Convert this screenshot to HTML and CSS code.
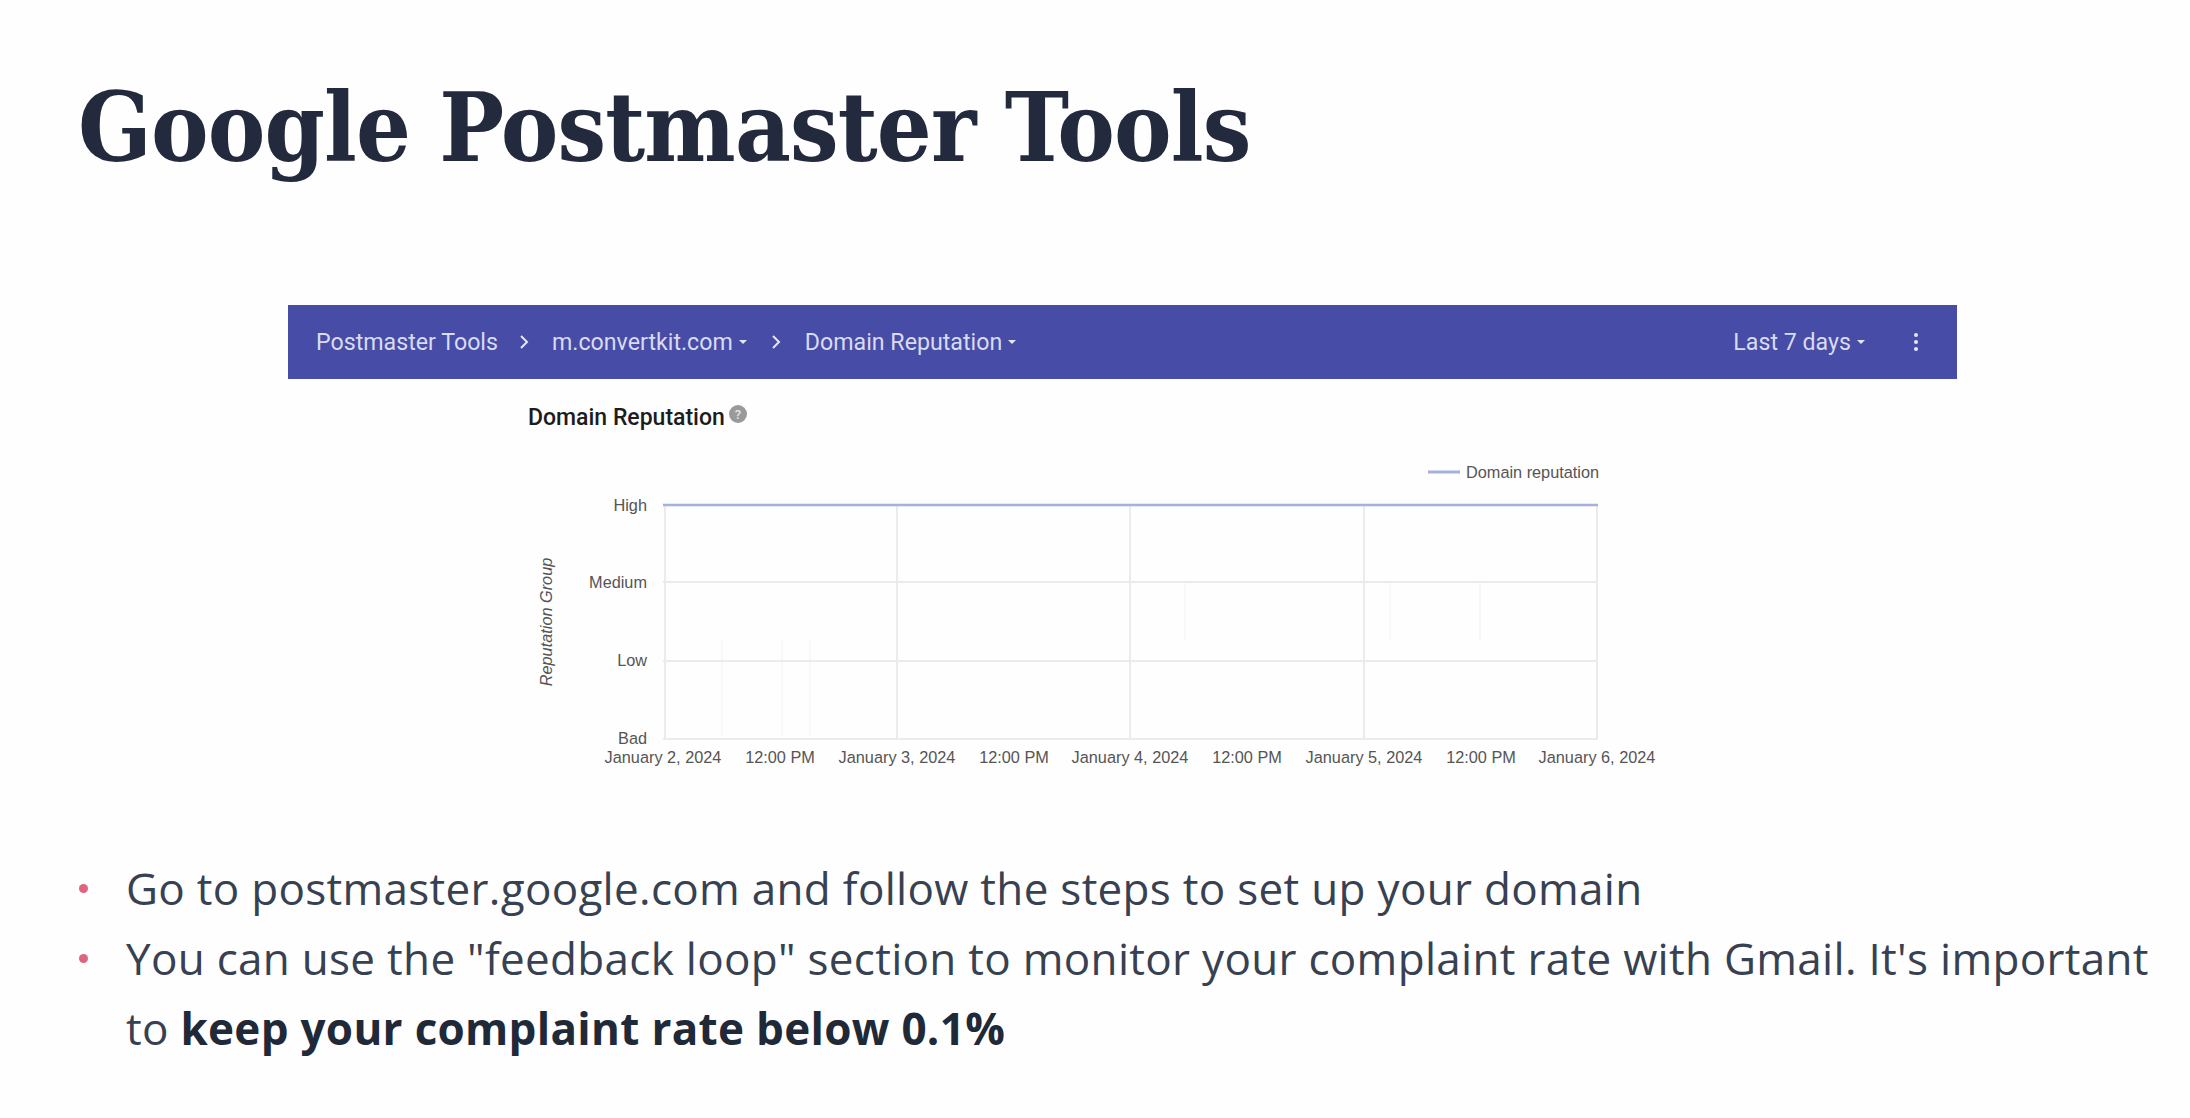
FILE: index.html
```html
<!DOCTYPE html>
<html lang="en">
<head>
  <meta charset="UTF-8" />
  <title>Google Postmaster Tools</title>
  <link rel="stylesheet" href="styles.css">
</head>
<body>

  <h1>Google Postmaster Tools</h1>

  <div class="shot">
    <div class="topbar">
      <span class="crumb">Postmaster Tools</span>
      <svg class="chevron" viewBox="0 0 10 16"><path d="M2 2l6 6-6 6" /></svg>
      <span class="crumb">m.convertkit.com</span>
      <span class="caret"></span>
      <svg class="chevron second" viewBox="0 0 10 16"><path d="M2 2l6 6-6 6" /></svg>
      <span class="crumb">Domain Reputation</span>
      <span class="caret"></span>
      <span class="range">Last 7 days</span>
      <span class="caret"></span>
      <svg class="dots" viewBox="0 0 6 20">
        <circle cx="3" cy="3" r="2" />
        <circle cx="3" cy="10" r="2" />
        <circle cx="3" cy="17" r="2" />
      </svg>
    </div>

    <div class="chart-title">
      <span>Domain Reputation</span>
      <svg class="help" viewBox="0 0 18 18">
        <circle cx="9" cy="9" r="9" />
        <text x="9" y="13.500">?</text>
      </svg>
    </div>

    <!-- viewBox uses the page coordinates so the ticks are easy to read off -->
    <svg class="chart" viewBox="520 450 1160 330">
      <line class="legend-line" x1="1428" y1="472" x2="1460" y2="472" />
      <text class="label" x="1466" y="477.500">Domain reputation</text>

      <g class="grid-faint">
        <line x1="722" y1="640" x2="722" y2="735" />
        <line x1="782" y1="640" x2="782" y2="735" />
        <line x1="810" y1="640" x2="810" y2="735" />
        <line x1="1185" y1="582" x2="1185" y2="640" />
        <line x1="1390" y1="582" x2="1390" y2="640" />
        <line x1="1480" y1="582" x2="1480" y2="640" />
      </g>

      <g class="grid">
        <line x1="663" y1="582" x2="1598" y2="582" />
        <line x1="663" y1="661" x2="1598" y2="661" />
        <line x1="663" y1="739" x2="1598" y2="739" />
        <line x1="665" y1="505" x2="665" y2="739" />
        <line x1="897" y1="505" x2="897" y2="739" />
        <line x1="1130" y1="505" x2="1130" y2="739" />
        <line x1="1364" y1="505" x2="1364" y2="739" />
        <line x1="1597" y1="505" x2="1597" y2="739" />
      </g>
      <line class="series" x1="663" y1="505" x2="1598" y2="505" />

      <text class="label end" x="647" y="511">High</text>
      <text class="label end" x="647" y="588">Medium</text>
      <text class="label end" x="647" y="666">Low</text>
      <text class="label end" x="647" y="744">Bad</text>
      <text class="label axis" transform="translate(552 622) rotate(-90)">Reputation Group</text>

      <text class="label mid" x="663" y="763">January 2, 2024</text>
      <text class="label mid" x="780" y="763">12:00 PM</text>
      <text class="label mid" x="897" y="763">January 3, 2024</text>
      <text class="label mid" x="1014" y="763">12:00 PM</text>
      <text class="label mid" x="1130" y="763">January 4, 2024</text>
      <text class="label mid" x="1247" y="763">12:00 PM</text>
      <text class="label mid" x="1364" y="763">January 5, 2024</text>
      <text class="label mid" x="1481" y="763">12:00 PM</text>
      <text class="label mid" x="1597" y="763">January 6, 2024</text>
    </svg>
  </div>

  <ul class="points">
    <li>Go to postmaster.google.com and follow the steps to set up your domain</li>
    <li>You can use the "feedback loop" section to monitor your complaint rate with Gmail. It's important to <strong>keep your complaint rate below 0.1%</strong></li>
  </ul>

</body>
</html>
```

FILE: styles.css
```css
body {
  margin: 0;
  height: 1118px;
  overflow: hidden;
  background-color: #fefefe;
  color: #374151;
  font-family: 'Open Sans', sans-serif;
}

h1 {
  margin: 0;
  padding: 63px 0 0 78px;
  font-family: 'DejaVu Serif Condensed', 'DejaVu Serif', serif;
  font-weight: 700;
  font-size: 96px;
  letter-spacing: -0.85px;
  line-height: 130px;
  color: #232a3d;
}

.shot {
  margin: 112px 0 0 288px;
  width: 1669px;
}

.topbar {
  display: flex;
  align-items: center;
  height: 74px;
  padding: 0 38px 0 28px;
  background-color: #474ca6;
  color: #d9dbf1;
  font-family: 'Roboto', sans-serif;
  font-size: 23.200px;
}

.chevron {
  width: 10px;
  height: 16px;
  margin: 0 23px 0 21px;
  fill: none;
  stroke: #e6e7f5;
  stroke-width: 2;
}

.chevron.second {
  margin: 0 24px 0 24px;
}

.caret {
  width: 0;
  height: 0;
  margin-left: 6px;
  border-left: 4px solid transparent;
  border-right: 4px solid transparent;
  border-top: 4px solid #e6e7f5;
}

.range {
  margin-left: auto;
}

.dots {
  width: 6px;
  height: 20px;
  margin-left: 48px;
  fill: #e6e7f5;
}

.chart-title {
  display: flex;
  align-items: flex-start;
  gap: 4px;
  padding: 26px 0 0 240px;
  font-family: 'Roboto', sans-serif;
  font-weight: 500;
  font-size: 23px;
  line-height: 26px;
  color: #1c1c1c;
}

.help {
  width: 18px;
  height: 18px;
  fill: #9a9a9a;
}

.help text {
  fill: #e4e4e4;
  font-size: 13px;
  text-anchor: middle;
}

.chart {
  display: block;
  width: 1160px;
  height: 330px;
  margin: 19px 0 0 232px;
}

.grid line {
  stroke: #ebebeb;
  stroke-width: 2;
}

.grid-faint line {
  stroke: #f8f8f8;
  stroke-width: 2;
}

.series {
  stroke: #a3b1dc;
  stroke-width: 2.500;
}

.legend-line {
  stroke: #a3b1dc;
  stroke-width: 3;
}

.label {
  font-family: 'Liberation Sans', sans-serif;
  font-size: 16.300px;
  fill: #555;
}

.end {
  text-anchor: end;
}

.mid {
  text-anchor: middle;
}

.axis {
  font-style: italic;
  text-anchor: middle;
}

.points {
  margin: 73px 0 0;
  padding: 0 20px 0 126px;
  list-style: none;
  font-size: 44px;
  letter-spacing: 0.300px;
  line-height: 70px;
}

.points li {
  position: relative;
}

.points li::before {
  content: '';
  position: absolute;
  left: -47px;
  top: 31px;
  width: 9px;
  height: 9px;
  border-radius: 50%;
  background-color: #e0637f;
}

.points strong {
  color: #1f2937;
}
```
